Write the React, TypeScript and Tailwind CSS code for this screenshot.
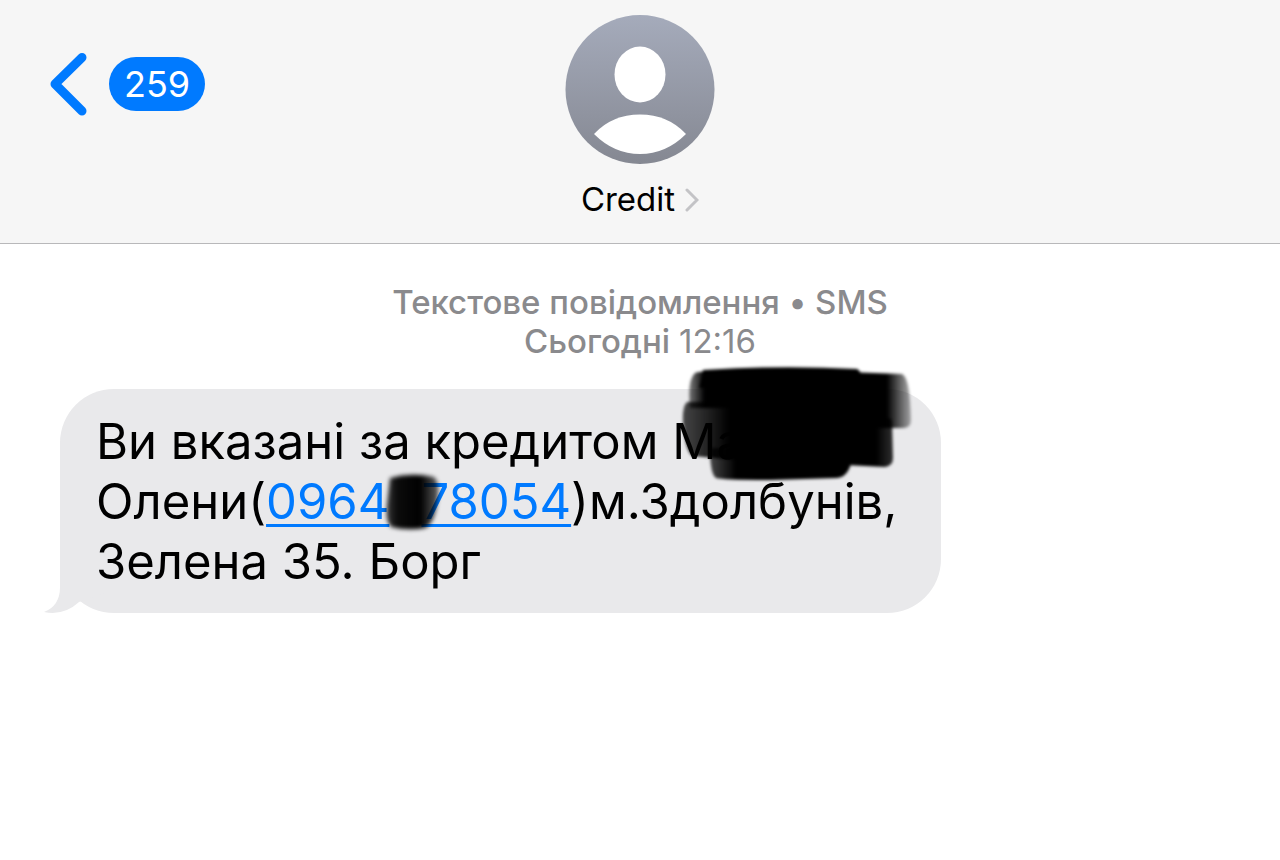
import type { ReactNode } from 'react';

const thread = {
  contact: 'Credit',
  unread: 259,
  service: 'Текстове повідомлення • SMS',
  day: 'Сьогодні',
  time: '12:16',
};

function BackChevron() {
  return (
    <svg width="38" height="64" viewBox="0 0 38 64" fill="none" aria-hidden="true">
      <path
        d="M33 5.500 L6 32 L33 59"
        stroke="#007aff"
        strokeWidth="9"
        strokeLinecap="round"
        strokeLinejoin="round"
      />
    </svg>
  );
}

function Avatar() {
  return (
    <svg width="150" height="150" viewBox="0 0 150 150" aria-hidden="true">
      <defs>
        <linearGradient id="avatar" x1="0" y1="0" x2="0" y2="1">
          <stop offset="0" stopColor="#a5abbb" />
          <stop offset="1" stopColor="#858892" />
        </linearGradient>
      </defs>
      <circle cx="75" cy="74.500" r="74.500" fill="url(#avatar)" />
      <ellipse cx="75" cy="59.500" rx="25.500" ry="28" fill="#fff" />
      <path d="M29 119 Q47 99.500 75 99.500 Q103 99.500 121 119 Q101 139 75 139 Q49 139 29 119 Z" fill="#fff" />
    </svg>
  );
}

function Header() {
  return (
    <header className="relative flex flex-col items-center border-b border-[#b8b8ba] bg-[#f6f6f6] pt-[15px] pb-[22px]">
      <button
        type="button"
        aria-label="Назад"
        className="absolute top-[52px] left-[49px] flex items-center gap-[22px]"
      >
        <BackChevron />
        <span className="flex h-[54px] items-center rounded-full bg-[#007aff] px-[15px] text-[36px] leading-[54px] text-white">
          {thread.unread}
        </span>
      </button>
      <Avatar />
      <button type="button" className="mt-3 flex items-center gap-[10px] text-[33px] leading-[44px]">
        {thread.contact}
        <svg width="14" height="26" viewBox="0 0 14 26" fill="none" aria-hidden="true">
          <path d="M2 4 L12 14 L2 24" stroke="#c3c3c6" strokeWidth="3" strokeLinecap="round" />
        </svg>
      </button>
    </header>
  );
}

// Brush strokes painted over the surname
function NameScribble() {
  return (
    <svg
      className="absolute -top-[31px] right-[20px]"
      width="250"
      height="130"
      viewBox="0 0 250 130"
      aria-hidden="true"
    >
      <defs>
        <filter id="brush" x="-10%" y="-10%" width="120%" height="120%">
          <feGaussianBlur stdDeviation="1.6" />
        </filter>
        <linearGradient id="fadeTop">
          <stop offset="0" stopOpacity="0.5" />
          <stop offset="0.07" />
          <stop offset="0.89" />
          <stop offset="0.96" stopOpacity="0.55" />
          <stop offset="1" stopOpacity="0.3" />
        </linearGradient>
        <linearGradient id="fadeMid">
          <stop offset="0" stopOpacity="0.7" />
          <stop offset="0.12" stopOpacity="0.86" />
          <stop offset="0.22" />
          <stop offset="0.92" />
          <stop offset="1" stopOpacity="0.8" />
        </linearGradient>
        <linearGradient id="fadeLow">
          <stop offset="0" stopOpacity="0.7" />
          <stop offset="0.18" />
          <stop offset="1" />
        </linearGradient>
      </defs>
      <g filter="url(#brush)">
        <path d="M24 15 Q29 12 120 12 L231 16 Q239 19 240 62 Q240 70 232 70 L180 70 L180 50 L19 50 Q16 22 24 15 Z" fill="url(#fadeTop)" />
        <path d="M32 12 Q110 7 186 11 Q191 13 193 30 L28 30 Z" fill="#000" />
        <path d="M16 44 Q11 49 12 65 Q14 92 21 98 L55 101 L214 109 Q222 108 222 100 L221 62 L190 43 Z" fill="url(#fadeMid)" />
        <path d="M39 90 Q39 116 45 120 Q50 122 100 122 L166 120 Q181 119 182 90 Z" fill="url(#fadeLow)" />
      </g>
    </svg>
  );
}

function DigitScribble() {
  return (
    <svg
      className="absolute -top-[3px] -left-[8px]"
      width="64"
      height="66"
      viewBox="0 0 64 66"
      aria-hidden="true"
    >
      <defs>
        <filter id="softBrush" x="-20%" y="-20%" width="140%" height="140%">
          <feGaussianBlur stdDeviation="2.2" />
        </filter>
        <linearGradient id="fadeDigit">
          <stop offset="0" stopOpacity="0.75" />
          <stop offset="0.2" stopOpacity="0.95" />
          <stop offset="0.65" />
          <stop offset="1" stopOpacity="0.6" />
        </linearGradient>
      </defs>
      <path
        d="M9 9 Q30 3 53 8 Q60 14 56 35 Q53 55 44 59 Q26 62 10 58 Q4 52 6 35 Z"
        fill="url(#fadeDigit)"
        filter="url(#softBrush)"
      />
    </svg>
  );
}

function Bubble({ children }: { children: ReactNode }) {
  return (
    <div className="relative w-fit rounded-[54px] bg-[#e9e9eb] pt-[23px] pr-[44px] pb-[21px] pl-[36px]">
      <svg
        className="absolute bottom-0 -left-[16px]"
        width="60"
        height="60"
        viewBox="0 0 60 60"
        aria-hidden="true"
      >
        <path d="M16 0 L16 34 Q16 53 0 59 Q20 63 35 49 L60 40 L40 0 Z" fill="#e9e9eb" />
      </svg>
      {children}
    </div>
  );
}

export default function App() {
  return (
    <div className="min-h-screen bg-white font-['Inter','Liberation_Sans',sans-serif] text-black">
      <Header />
      <main className="px-[60px] pt-[39px]">
        <p className="text-center text-[33px] leading-[39px] font-medium text-[#8a8a8d]">
          {thread.service}
          <br />
          {thread.day} <span className="font-normal">{thread.time}</span>
        </p>
        <div className="mt-[28px]">
          <Bubble>
            <p className="relative text-[49px] leading-[60px] whitespace-nowrap">
              Ви вказані за кредитом Ма
              <br />
              Олени(
              <a href="tel:" className="text-[#007aff] underline decoration-[3px] underline-offset-[5px]">
                0964
                <span className="relative inline-block h-[60px] w-[32px] align-top">
                  <DigitScribble />
                </span>
                78054
              </a>
              )м.Здолбунів,
              <br />
              Зелена 35. Борг
            </p>
            <NameScribble />
          </Bubble>
        </div>
      </main>
    </div>
  );
}
